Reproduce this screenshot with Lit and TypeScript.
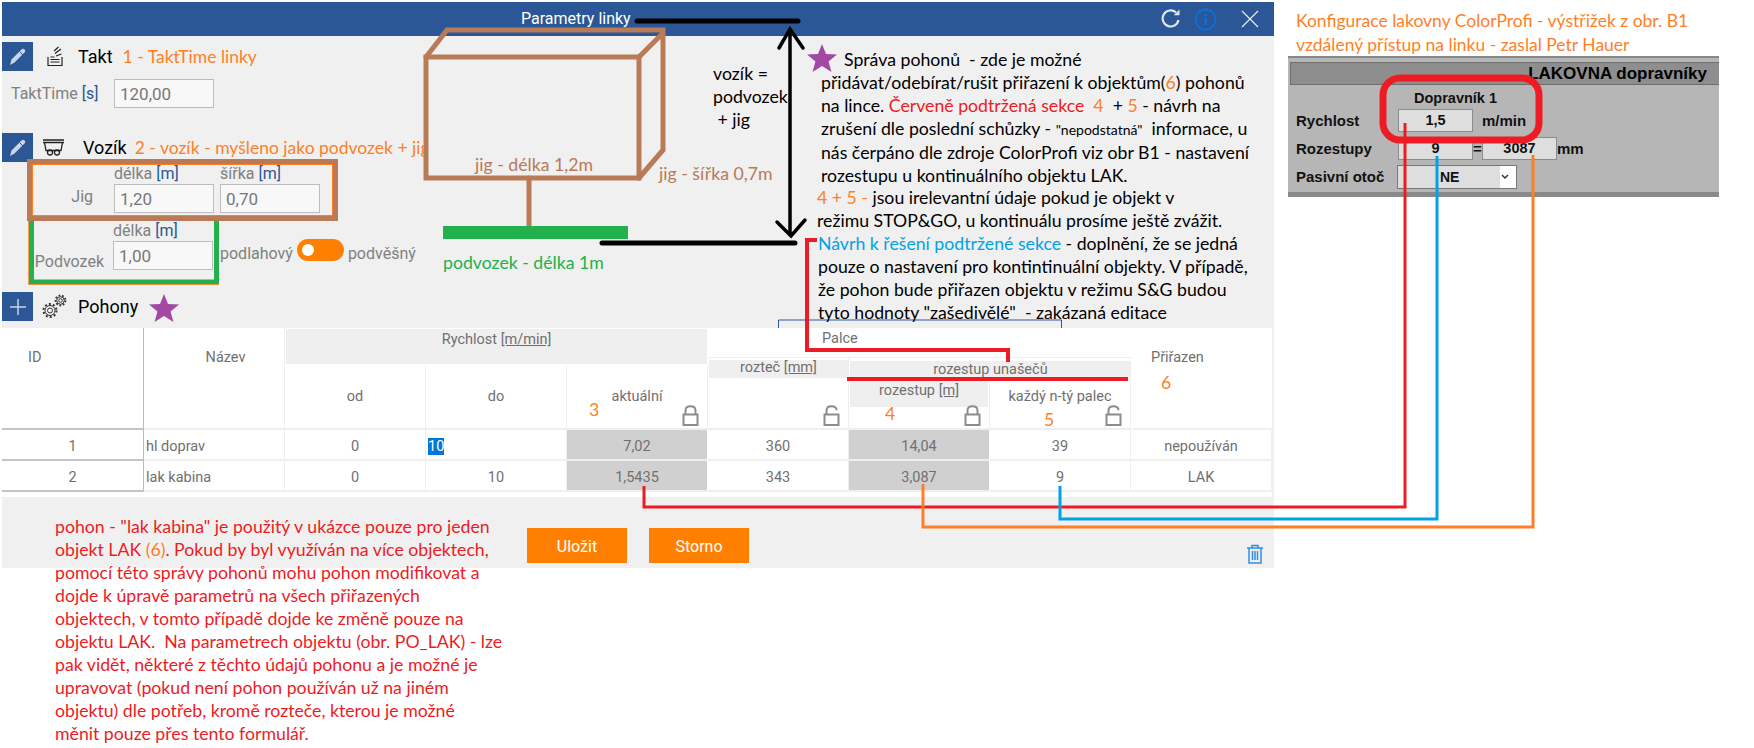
import { LitElement, html, css, svg } from "lit";
import { customElement } from "lit/decorators.js";

const pencil = html`<svg width="18" height="18" viewBox="0 0 18 18"><path d="M1 17l1.500-5.500L12.500 1.500c1-1 2-1 3 0s1 2 0 3L5.500 14.500z" fill="#c9d5e8"/><path d="M10.500 3.500l4 4" stroke="#2b5797" stroke-width="1"/></svg>`;

const lock = (open: boolean) => html`<svg class="lock" width="17" height="21" viewBox="0 0 17 21" fill="none" stroke="#8c8c8c" stroke-width="2">
  <rect x="1.500" y="9.500" width="14" height="10.500"/>
  <path d=${open ? "M3.500 9V5.500C3.500 3 5.500 1.200 8.500 1.200s5 1.800 5 4" : "M3.500 9V5.500C3.500 3 5.500 1.200 8.500 1.200s5 1.800 5 4.300V9"}/>
</svg>`;

const star = html`<svg class="star" width="30" height="28" viewBox="0 0 30 28"><path d="M15 0l4 10 11 .5-8.500 7L24.500 28 15 22 5.500 28l3-10.500L0 10.500 11 10z" fill="#a349a4"/></svg>`;

const redNote = [
  html`pohon - "lak kabina" je použitý v ukázce pouze pro jeden`,
  html`objekt LAK <span class="orange">(6)</span>. Pokud by byl využíván na více objektech,`,
  html`pomocí této správy pohonů mohu pohon modifikovat a`,
  html`dojde k úpravě parametrů na všech přiřazených`,
  html`objektech, v tomto případě dojde ke změně pouze na`,
  html`objektu LAK.  Na parametrech objektu (obr. PO_LAK) - lze`,
  html`pak vidět, některé z těchto údajů pohonu a je možné je`,
  html`upravovat (pokud není pohon používán už na jiném`,
  html`objektu) dle potřeb, kromě rozteče, kterou je možné`,
  html`měnit pouze přes tento formulář.`,
];

const rows = [
  { id: "1", name: "hl doprav", od: "0", act: "7,02", pitch: "360", gap: "14,04", nth: "39", assigned: "nepoužíván" },
  { id: "2", name: "lak kabina", od: "0", act: "1,5435", pitch: "343", gap: "3,087", nth: "9", assigned: "LAK" },
];

@customElement("app-root")
export class AppRoot extends LitElement {
  static styles = css`
    :host {
      display: block;
      position: relative;
      width: 1754px;
      height: 748px;
      overflow: hidden;
      background: #fff;
      font-family: Roboto, sans-serif;
      color: #808080;
    }

    .window {
      width: 1272px;
      height: 566px;
      margin: 2px 0 0 2px;
      background: #f0f0f0;
      display: flex;
      flex-direction: column;
    }

    /* horni lista */
    .titlebar {
      flex: none;
      height: 34px;
      background: #2b5797;
      display: flex;
      align-items: center;
      color: #fff;
      font-size: 16px;
    }
    .titlebar .title { margin-left: 519px; margin-top: -2px; flex: 1; }
    .titlebar svg { display: block; }
    .titlebar .tools { display: flex; align-items: center; gap: 12px; margin-right: 15px; }

    .head {
      display: flex;
      align-items: center;
      height: 29px;
      color: #000;
      font-size: 18px;
    }
    .head .btn {
      width: 31px;
      height: 29px;
      background: #2b5797;
      display: flex;
      align-items: center;
      justify-content: center;
      flex: none;
    }
    .head .ico { flex: none; display: block; }
    .takt { margin-top: 6px; }
    .vozik { margin-top: 25px; }
    .pohony { margin-top: 22px; }

    .row { display: flex; align-items: flex-end; font-size: 16px; }
    .input {
      box-sizing: border-box;
      width: 100px;
      height: 29px;
      background: #f8f8f8;
      border: 1px solid #bdbdbd;
      color: #777;
      font-size: 17px;
      line-height: 28px;
      padding-left: 5px;
    }
    .unit { color: #2b5797; }
    .lbl { width: 112px; flex: none; box-sizing: border-box; }
    .takt-row { margin-top: 8px; align-items: center; }
    .takt-row .lbl { padding-left: 9px; }
    .jig-row .lbl { text-align: right; padding-right: 21px; height: 26px; }
    .pod-row .lbl { text-align: right; width: 111px; padding-right: 9px; height: 20px; line-height: 23px; }
    .field { display: flex; flex-direction: column; margin-right: 6px; }
    .field .cap { height: 22px; line-height: 24px; white-space: nowrap; }
    .pod-row .field .cap { height: 28px; line-height: 36px; }

    .switch { display: flex; align-items: center; gap: 4px; height: 30px; margin-left: 1px; padding-bottom: 2px; }
    .toggle {
      width: 47px;
      height: 22px;
      border-radius: 11px;
      background: #ff8000;
      position: relative;
      margin-top: -6px;
    }
    .toggle::after {
      content: "";
      position: absolute;
      left: 5px;
      top: 5px;
      width: 12px;
      height: 12px;
      border-radius: 50%;
      background: #fff;
    }

    /* tabulka pohonu */
    .table {
      margin-top: 7px;
      width: 1270px;
      background: #fff;
      font-size: 14.500px;
      color: #707070;
      padding-bottom: 5px;
      flex: none;
    }
    .thead { display: flex; height: 102px; }
    .c {
      box-sizing: border-box;
      width: 141px;
      flex: none;
      border-right: 1px solid #efefef;
      border-bottom: 2px solid #efefef;
      position: relative;
      display: flex;
      align-items: center;
      justify-content: center;
      text-align: center;
    }
    .c.first { width: 142px; border-right: 1.500px solid #bbb; border-bottom-color: #c4c4c4; }
    .c.top { align-items: flex-start; padding-top: 21px; }
    .c.id { justify-content: flex-start; padding-left: 26px; }
    .group { display: flex; flex-direction: column; flex: none; }
    .group .band { display: flex; align-items: flex-start; justify-content: center; }
    .rychlost { width: 423px; }
    .rychlost .band { height: 35px; margin: 1px; background: #efefef; padding-top: 2px; box-sizing: border-box; line-height: 18px; }
    .sub { display: flex; flex: 1; }
    .sub .c { align-items: flex-start; padding-top: 23px; }
    .palce { width: 424px; }
    .palce .band { height: 30px; justify-content: flex-start; padding: 2px 0 0 114px; box-sizing: border-box; line-height: 18px; border-bottom: 1px solid #efefef; }
    .palce .sub .c { padding-top: 0; }
    .pitch { flex-direction: column; justify-content: flex-start !important; }
    .chip { background: #efefef; box-sizing: border-box; align-self: stretch; }
    .pitch .chip { margin: 2px 0 0 1px; height: 18px; line-height: 16px; }
    .spread { display: flex; flex-direction: column; width: 283px; flex: none; }
    .spread > .chip { margin: 3px 1px 0 1px; height: 17px; line-height: 17px; text-align: center; }
    .spread .sub .c { height: auto; }
    .spread .gap { flex-direction: column; justify-content: flex-start; }
    .spread .gap .chip { height: 29px; margin: 0 1px; line-height: 26px; }
    .spread .nth { padding-top: 10px !important; }
    .lock { position: absolute; right: 8px; bottom: 2px; }

    .tr { display: flex; height: 31px; }
    .tr .c { padding-top: 3px; }
    .tr .name { justify-content: flex-start; padding-left: 2px; }
    .tr .dark { background: #d0d0d0; border-right-color: #fff; }
    .selected { background: #0078d7; color: #fff; padding: 0; margin-right: 120px; width: 16px; line-height: 17px; }

    /* spodni cast s tlacitky */
    .footer { flex: 1; display: flex; align-items: flex-start; padding: 31px 0 0 525px; position: relative; }
    .button {
      width: 100px;
      height: 35px;
      line-height: 37px;
      text-align: center;
      background: #ff8000;
      color: #fff;
      font-size: 16px;
      margin-right: 22px;
    }
    .trash { position: absolute; right: 10px; bottom: 4px; }

    /* poznamky pres obrazovku */
    .ink { position: absolute; left: 0; top: 0; pointer-events: none; }
    .note {
      position: absolute;
      font-family: Lato, sans-serif;
      font-size: 17.700px;
      line-height: 23px;
      color: #000;
      white-space: pre;
    }
    .note.title-note { font-size: 17.500px; }
    .orange { color: #ff7f27; }
    .red { color: #ed1c24; }
    .blue { color: #00a2e8; }
    .brown { color: #b97a57; }
    .green { color: #22b14c; }
    .small { font-size: 14px; }
    .star { position: absolute; }
    .inline-note { font-family: Lato, sans-serif; font-size: 17.500px; line-height: 24px; color: #ff7f27; white-space: pre; overflow: hidden; }
    .vozik .inline-note { width: 292px; }

    /* vystrizek ColorProfi */
    .shot {
      position: absolute;
      left: 1288px;
      top: 56px;
      width: 431px;
      height: 141px;
      box-sizing: border-box;
      background: #b6b6b6;
      border-top: 2px solid #888;
      border-bottom: 5px solid #8a8a8a;
      font-family: "Liberation Sans", Arial, sans-serif;
      font-weight: 700;
      font-size: 15px;
      color: #111;
    }
    .shot .bar {
      height: 21px;
      margin: 4px 0 0 2px;
      background: #8e8e8e;
      border: 1px solid #6e6e6e;
      border-right: 0;
      text-align: right;
      padding-right: 12px;
      font-size: 17px;
      line-height: 21px;
      color: #000;
    }
    .shot .grid {
      display: grid;
      grid-template-columns: 102px 75px 9px 75px auto;
      grid-auto-rows: 23px;
      row-gap: 5px;
      padding-left: 8px;
      align-items: center;
    }
    .shot .dop { height: 24px; line-height: 27px; padding-left: 126px; font-size: 14.500px; }
    .shot .box {
      box-sizing: border-box;
      height: 23px;
      background: #dedede;
      border: 1px solid #8c8c8c;
      text-align: center;
      line-height: 21px;
      font-size: 14.500px;
    }
    .shot .select {
      grid-column: 2 / span 3;
      width: 120px;
      margin-left: -1px;
      height: 24px;
      box-sizing: border-box;
      border: 1px solid #777;
      background: linear-gradient(90deg, #dedede 102px, #fff 102px);
      display: flex;
      align-items: center;
      padding-left: 42px;
      font-size: 14px;
    }
    .shot .select svg { margin-left: 42px; }
    .shot .unit-min { grid-column: span 2; }
  `;

  render() {
    return html`
      <div class="window">
        <div class="titlebar">
          <span class="title">Parametry linky</span>
          <div class="tools">
            <svg width="22" height="22" viewBox="0 0 22 22" fill="none" stroke="#dfe6f1" stroke-width="2.200"><path d="M18.500 12a8 8 0 1 1-2.500-7.500"/><path d="M19.500 1.500v5.800h-5.800z" fill="#dfe6f1" stroke="none"/></svg>
            <svg width="23" height="23" viewBox="0 0 23 23" fill="none" stroke="#0d6fd8" stroke-width="1.800"><circle cx="11.500" cy="11.500" r="10"/><path d="M11.500 10v7M11.500 6v2.200" stroke-width="2.400"/></svg>
            <svg width="18" height="18" viewBox="0 0 18 18" stroke="#e6ecf5" stroke-width="1.200" style="margin-left:12px"><path d="M1 1l16 16M17 1L1 17"/></svg>
          </div>
        </div>

        <div class="head takt">
          <div class="btn">${pencil}</div>
          <svg class="ico" style="margin:0 14px" width="17" height="21" viewBox="0 0 17 21" fill="none" stroke="#222" stroke-width="1.200">
            <path d="M1 11v8.500h14V11M3.500 11h4M3.500 13.500h9M3.500 16h9M9 10l5.500-2M8 7.500l6-4.500M7 5l4.500-4"/>
          </svg>
          <span>Takt</span><span class="inline-note" style="margin-left:10px">1 - TaktTime linky</span>
        </div>
        <div class="row takt-row">
          <span class="lbl">TaktTime <span class="unit">[s]</span></span>
          <div class="input">120,00</div>
        </div>

        <div class="head vozik">
          <div class="btn">${pencil}</div>
          <svg class="ico" style="margin:0 18px 0 9px" width="23" height="17" viewBox="0 0 23 17" fill="none" stroke="#222" stroke-width="1.300">
            <path d="M1 1h21M1 3.500h21M2.500 3.500l1.500 8h15l1.500-8"/><circle cx="8" cy="13.500" r="2.500"/><circle cx="15" cy="13.500" r="2.500"/>
          </svg>
          <span>Vozík</span><span class="inline-note" style="margin-left:8px">2 - vozík - myšleno jako podvozek + jig</span>
        </div>
        <div class="row jig-row">
          <span class="lbl">Jig</span>
          <div class="field"><span class="cap">délka <span class="unit">[m]</span></span><div class="input">1,20</div></div>
          <div class="field"><span class="cap">šířka <span class="unit">[m]</span></span><div class="input">0,70</div></div>
        </div>
        <div class="row pod-row">
          <span class="lbl">Podvozek</span>
          <div class="field"><span class="cap">délka <span class="unit">[m]</span></span><div class="input">1,00</div></div>
          <div class="switch"><span>podlahový</span><span class="toggle"></span><span>podvěšný</span></div>
        </div>

        <div class="head pohony">
          <div class="btn">
            <svg width="18" height="18" viewBox="0 0 18 18" stroke="#c9d5e8" stroke-width="1.500"><path d="M9 1v16M1 9h16"/></svg>
          </div>
          <svg class="ico" style="margin:0 11px 0 9px" width="25" height="25" viewBox="0 0 25 25" fill="none" stroke="#333" stroke-width="1">
            <circle cx="8" cy="16.500" r="2.500"/><circle cx="8" cy="16.500" r="5"/><circle cx="8" cy="16.500" r="6.500" stroke-width="2" stroke-dasharray="2 2.100"/>
            <circle cx="18.500" cy="6.500" r="1.800"/><circle cx="18.500" cy="6.500" r="3.800"/><circle cx="18.500" cy="6.500" r="5" stroke-width="1.800" stroke-dasharray="1.800 1.700"/>
          </svg>
          <span>Pohony</span>
        </div>

        <div class="table">
          <div class="thead">
            <div class="c first top id">ID</div>
            <div class="c top"><span style="margin-left:23px">Název</span></div>
            <div class="group rychlost">
              <div class="band"><span>Rychlost <u>[m/min]</u></span></div>
              <div class="sub">
                <div class="c">od</div>
                <div class="c">do</div>
                <div class="c">aktuální${lock(false)}</div>
              </div>
            </div>
            <div class="group palce">
              <div class="band">Palce</div>
              <div class="sub">
                <div class="c pitch"><div class="chip">rozteč <u>[mm]</u></div>${lock(true)}</div>
                <div class="spread">
                  <div class="chip">rozestup unašečů</div>
                  <div class="sub">
                    <div class="c gap"><div class="chip">rozestup <u>[m]</u></div>${lock(false)}</div>
                    <div class="c nth">každý n-tý palec${lock(true)}</div>
                  </div>
                </div>
              </div>
            </div>
            <div class="c top" style="justify-content:flex-start;padding-left:19px">Přiřazen</div>
          </div>
          ${rows.map(
            (r, i) => html`<div class="tr">
              <div class="c first">${r.id}</div>
              <div class="c name">${r.name}</div>
              <div class="c">${r.od}</div>
              <div class="c">${i === 0 ? html`<span class="selected">10</span>` : "10"}</div>
              <div class="c dark">${r.act}</div>
              <div class="c">${r.pitch}</div>
              <div class="c dark">${r.gap}</div>
              <div class="c">${r.nth}</div>
              <div class="c">${r.assigned}</div>
            </div>`
          )}
        </div>

        <div class="footer">
          <div class="button">Uložit</div>
          <div class="button">Storno</div>
          <svg class="trash" width="18" height="20" viewBox="0 0 18 20" fill="none" stroke="#2f8fe8" stroke-width="1.500">
            <path d="M1 4h16M6 4V1.500h6V4M3 4v15h12V4M6.500 7v9M9 7v9M11.500 7v9"/>
          </svg>
        </div>
      </div>

      ${this.renderShot()}
      ${this.renderInk()}
      ${this.renderNotes()}
    `;
  }

  renderShot() {
    return html`<div class="shot">
      <div class="bar">LAKOVNA dopravníky</div>
      <div class="dop">Dopravník 1</div>
      <div class="grid">
        <span>Rychlost</span><div class="box">1,5</div><span></span><span class="unit-min">m/min</span>
        <span>Rozestupy</span><div class="box">9</div><span>=</span><div class="box">3087</div><span>mm</span>
        <span>Pasivní otoč</span>
        <div class="select">NE<svg width="8" height="6" viewBox="0 0 8 6" fill="none" stroke="#333" stroke-width="1.500"><path d="M1 1l3 3 3-3"/></svg></div>
      </div>
    </div>`;
  }

  renderInk() {
    return html`<svg class="ink" width="1754" height="748" fill="none">
      ${svg`
        <g stroke="#22b14c" stroke-width="5"><path d="M31.500 216v66h185v-66" /></g>
        <path d="M29 216H219M28.500 216v68.500H219" stroke="#ff7f27" stroke-width="1" opacity=".8"/>
        <rect x="29.500" y="161.500" width="306" height="57" stroke="#b97a57" stroke-width="5"/>
        <rect x="32.500" y="164.500" width="300" height="51" stroke="#ff7f27" stroke-width="1"/>

        <g stroke="#b97a57" stroke-width="5" stroke-linecap="round">
          <rect x="426" y="57" width="213" height="121"/>
          <path d="M426 57l21-27h216v120l-24 28M639 57l24-24M529 178v47"/>
        </g>
        <rect x="443" y="226" width="185" height="13" fill="#22b14c"/>

        <g stroke="#000" stroke-linecap="round">
          <path d="M637 21h161M602 243h193" stroke-width="5"/>
          <path d="M790 29v206M779 48l11-19 13 19M777 222l14 14 14-16" stroke-width="3.500"/>
        </g>

        <path d="M778.500 328v-8h283v8" stroke="#2b5797" stroke-width="1"/>
        <g stroke="#ed1c24" stroke-width="4">
          <path d="M817 240h-10v110h201v12M847 379h281"/>
        </g>
        <path d="M644 486v21h761V123" stroke="#ed1c24" stroke-width="3"/>
        <path d="M1060 486v33h377V156" stroke="#00a2e8" stroke-width="3"/>
        <path d="M923 484v43h610V155" stroke="#ff7f27" stroke-width="3"/>
        <rect x="1383" y="78" width="156" height="62" rx="17" stroke="#ed1c24" stroke-width="7"/>
      `}
    </svg>`;
  }

  renderNotes() {
    return html`
      <div class="note" style="left:713px;top:62px">vozík =
podvozek
 + jig</div>
      <div class="note brown" style="left:475px;top:153px">jig - délka 1,2m</div>
      <div class="note brown" style="left:659px;top:162px">jig - šířka 0,7m</div>
      <div class="note green" style="left:443px;top:251px">podvozek - délka 1m</div>

      <div class="star" style="left:149px;top:294px">${star}</div>
      <div class="star" style="left:807px;top:44px">${star}</div>

      <div class="note" style="left:821px;top:48px"><span style="margin-left:23px">Správa pohonů  - zde je možné</span>
přidávat/odebírat/rušit přiřazení k objektům(<span class="orange">6</span>) pohonů
na lince. <span class="red">Červeně podtržená sekce</span>  <span class="orange">4</span>  + <span class="orange">5</span> - návrh na
zrušení dle poslední schůzky - <span class="small">"nepodstatná"</span>  informace, u
nás čerpáno dle zdroje ColorProfi viz obr B1 - nastavení
rozestupu u kontinuálního objektu LAK.</div>
      <div class="note" style="left:817px;top:186px"><span class="orange">4 + 5 - </span>jsou irelevantní údaje pokud je objekt v
režimu STOP&GO, u kontinuálu prosíme ještě zvážit.</div>
      <div class="note" style="left:818px;top:232px"><span class="blue">Návrh k řešení podtržené sekce</span> - doplnění, že se jedná
pouze o nastavení pro kontintinuální objekty. V případě,
že pohon bude přiřazen objektu v režimu S&G budou
tyto hodnoty "zašedivělé"  - zakázaná editace</div>

      <div class="note orange title-note" style="left:1296px;top:9px">Konfigurace lakovny ColorProfi - výstřižek z obr. B1</div>
      <div class="note orange title-note" style="left:1296px;top:33px;height:23px;overflow:hidden">vzdálený přístup na linku - zaslal Petr Hauer</div>

      <div class="note orange" style="left:589px;top:398px">3</div>
      <div class="note orange" style="left:885px;top:402px">4</div>
      <div class="note orange" style="left:1044px;top:408px">5</div>
      <div class="note orange" style="left:1161px;top:371px">6</div>

      <div class="note red" style="left:55px;top:515px">${redNote.map((l) => html`<div>${l}</div>`)}</div>
    `;
  }
}
